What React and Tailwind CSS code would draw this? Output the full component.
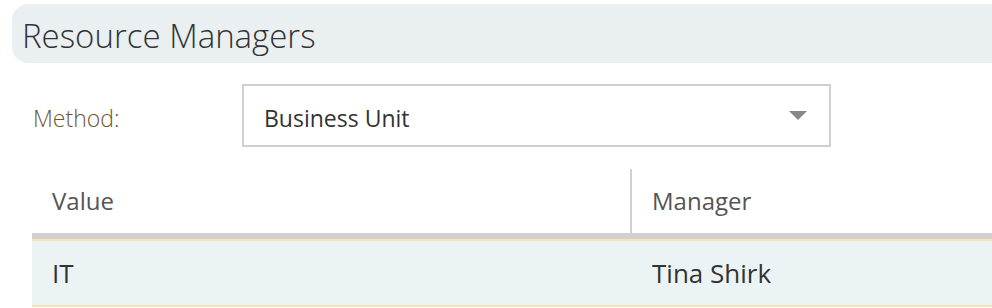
export default function App() {
  return (
    <div className="w-[992px] h-[308px] overflow-hidden bg-white font-['Open_Sans',sans-serif]">
      <div className="pt-1 pl-3">
        <div className="h-[59px] bg-[#eaeff2] rounded-l-[16px] flex items-center pl-[10px] pt-[3px]">
          <h1 className="text-[33px] font-light text-[#333333] leading-none">Resource Managers</h1>
        </div>
      </div>

      <div className="flex items-center mt-[21px] h-[63px]">
        <label className="w-[242px] pl-[33px] pt-[6px] text-[23px] font-light text-[#705530]">Method:</label>
        <div className="w-[589px] h-[63px] border-2 border-[#d0d0d0] flex items-center justify-between pl-[20px] pr-[22px]">
          <span className="text-[23px] text-[#333333] pt-[5px]">Business Unit</span>
          <svg width="18" height="10" viewBox="0 0 18 10">
            <polygon points="0,0 18,0 9,9" fill="#888888" />
          </svg>
        </div>
      </div>

      <div className="ml-8 mt-[22px]">
        <div className="flex h-[70px] border-b-[6px] border-[#d0d0d0]">
          <div className="w-[600px] flex items-center pl-5 text-[24px] text-[#555555] border-r-2 border-[#d0d0d0]">Value</div>
          <div className="flex-1 flex items-center pl-5 text-[24px] text-[#555555]">Manager</div>
        </div>
        <div className="flex h-[68px] bg-[#ecf3f5] border-t-2 border-b-2 border-[#f5e4b5]">
          <div className="w-[600px] flex items-center pl-5 text-[26px] text-[#333333]">IT</div>
          <div className="flex-1 flex items-center pl-5 text-[26px] text-[#333333]">Tina Shirk</div>
        </div>
      </div>
    </div>
  );
}
